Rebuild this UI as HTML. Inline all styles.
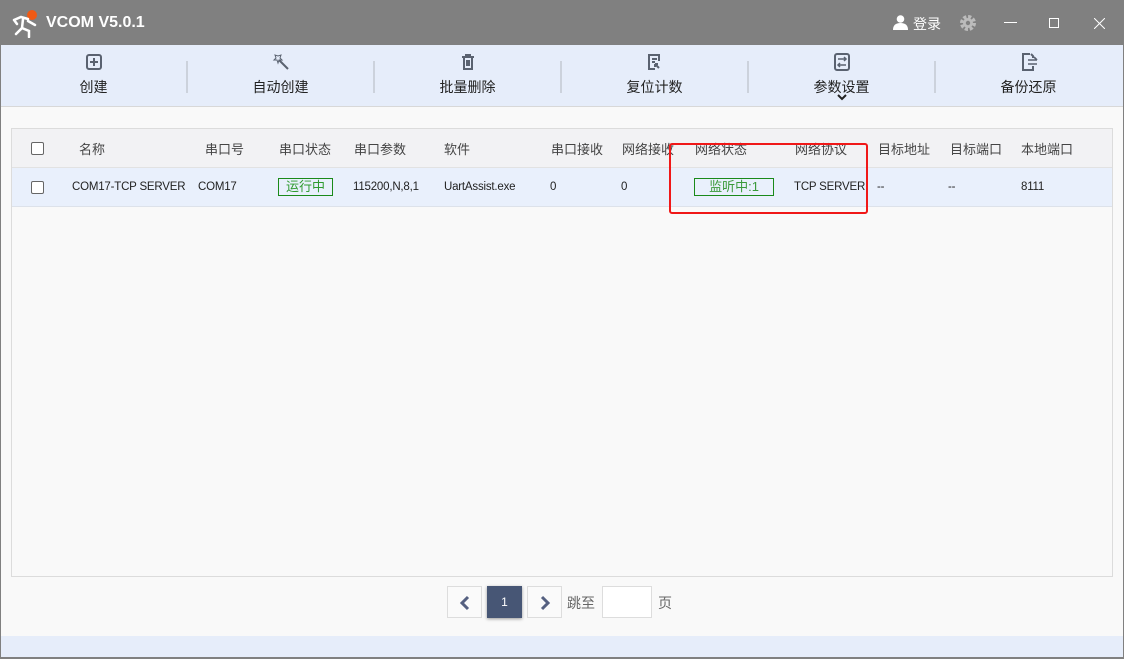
<!DOCTYPE html>
<html><head><meta charset="utf-8"><style>
*{margin:0;padding:0;box-sizing:border-box}
body{width:1124px;height:659px;position:relative;overflow:hidden;background:#f9f9f9;font-family:"Liberation Sans","Noto Sans CJK SC",sans-serif;font-size:13px;color:#333}
.abs{position:absolute}
#title{left:0;top:0;width:1124px;height:45px;background:#808080;color:#fff}
#tb{left:0;top:45px;width:1124px;height:62px;background:#e6edfa;border-bottom:1px solid #d8d8d8}
.tool{position:absolute;top:0;width:187px;height:62px;text-align:center}
.tool .lbl{position:absolute;top:32px;left:0;width:100%;font-size:14px;color:#222}
.tool svg{position:absolute;top:8px;left:50%;margin-left:-9px}
.sep{position:absolute;top:16px;width:2px;height:32px;background:#ccd2dc}
#panel{left:11px;top:128px;width:1102px;height:449px;border:1px solid #dcdcdc;background:#f9f9f9}
#hdr{left:0;top:0;width:1100px;height:39px;background:#f2f2f4;border-bottom:1px solid #e2e2e2}
#row{left:0;top:39px;width:1100px;height:39px;background:#e9f0fc;border-bottom:1px solid #dde2ea}
.c{position:absolute;top:10px;font-size:13px;white-space:nowrap}
#hdr .c{color:#444}
#row .c{font-size:11.5px;color:#222;top:13px;letter-spacing:-0.2px}
.cb{position:absolute;left:19px;top:13px;width:13px;height:13px;border:1.5px solid #666;border-radius:2px;background:#fff}
.tag{position:absolute;border:1px solid #1a8a1a;color:#2e9a2e;font-size:13px;text-align:center;line-height:16px;height:18px;top:10px}
.pg{position:absolute;top:586px;width:35px;height:32px;border:1px solid #ddd;background:#fafafa}
</style></head><body>
<div id="title" class="abs">
 <svg class="abs" style="left:11px;top:8px" width="28" height="30" viewBox="0 0 28 30"><circle cx="21" cy="7" r="5" fill="#f05a14"/><path d="M3 12 L10 9 L17 11 M12 11 L11 20 L5 26 M11 20 L18 23 L18 29 M17 13 L24 17 M3 12 L6 16" stroke="#fff" stroke-width="2.5" fill="none" stroke-linecap="round"/></svg>
 <div class="abs" style="left:46px;top:14px;font-size:16px;font-weight:bold">VCOM V5.0.1</div>
 <svg class="abs" style="left:893px;top:15px" width="15" height="15" viewBox="0 0 15 15"><circle cx="7.5" cy="4" r="3.8" fill="#fff"/><path d="M0 15 Q0 8 7.5 8 Q15 8 15 15Z" fill="#fff"/></svg>
 <div class="abs" style="left:913px;top:14px;font-size:14px">登录</div>
 <svg class="abs" style="left:959px;top:14px" width="18" height="18" viewBox="0 0 18 18"><circle cx="9" cy="9" r="6" fill="none" stroke="#bbb" stroke-width="4" stroke-dasharray="3 1.7"/><circle cx="9" cy="9" r="5" fill="#bbb"/><circle cx="9" cy="9" r="2.2" fill="#808080"/></svg>
 <div class="abs" style="left:1004px;top:22px;width:13px;height:1px;background:#fff"></div>
 <div class="abs" style="left:1049px;top:18px;width:10px;height:10px;border:1px solid #fff"></div>
 <svg class="abs" style="left:1094px;top:18px" width="11" height="11"><path d="M0 0L11 11M11 0L0 11" stroke="#fff" stroke-width="1"/></svg>
</div>
<div id="tb" class="abs">
 <div class="tool" style="left:0"><svg width="18" height="18"><rect x="2" y="2" width="14" height="14" rx="2" fill="none" stroke="#5a6270" stroke-width="2"/><path d="M9 5v8M5 9h8" stroke="#5a6270" stroke-width="2"/></svg><div class="lbl">创建</div></div>
 <div class="sep" style="left:186px"></div>
 <div class="tool" style="left:187px"><svg width="18" height="18"><path d="M7 7L16 16" stroke="#5a6270" stroke-width="2"/><path d="M3 2l1 3-2 2h3l1 3 1-3 3 0-2-2 1-3-3 1z" fill="none" stroke="#5a6270" stroke-width="1"/></svg><div class="lbl">自动创建</div></div>
 <div class="sep" style="left:373px"></div>
 <div class="tool" style="left:374px"><svg width="18" height="18"><path d="M3 4h12M7 4V2h4v2M5 4v12h8V4M8 7v6M10 7v6" fill="none" stroke="#5a6270" stroke-width="2"/></svg><div class="lbl">批量删除</div></div>
 <div class="sep" style="left:560px"></div>
 <div class="tool" style="left:561px"><svg width="18" height="18"><path d="M13 8V2H3v14h6M6 6h5M6 9h3" fill="none" stroke="#5a6270" stroke-width="2"/><path d="M9 11l4 4M9 11h3M9 11v3" stroke="#5a6270" stroke-width="2"/></svg><div class="lbl">复位计数</div></div>
 <div class="sep" style="left:747px"></div>
 <div class="tool" style="left:748px"><svg width="18" height="18"><rect x="2" y="1" width="14" height="16" rx="2" fill="none" stroke="#5a6270" stroke-width="2"/><path d="M5 6h8M11 4l2 2-2 2M13 12H5M7 10l-2 2 2 2" fill="none" stroke="#5a6270" stroke-width="1.5"/></svg><div class="lbl">参数设置</div><svg style="top:49px;margin-left:-5px" width="10" height="7"><path d="M1 1l4 4 4-4" fill="none" stroke="#222" stroke-width="2"/></svg></div>
 <div class="sep" style="left:934px"></div>
 <div class="tool" style="left:935px"><svg width="18" height="18"><path d="M10 1H3v16h10v-4M13 5V3l-2-2" fill="none" stroke="#5a6270" stroke-width="2"/><path d="M8 7h9M8 11h9M14 4l3 3" fill="none" stroke="#5a6270" stroke-width="1.6"/></svg><div class="lbl">备份还原</div></div>
</div>
<div id="panel" class="abs">
 <div id="hdr" class="abs">
  <div class="cb"></div>
  <div class="c" style="left:67px">名称</div><div class="c" style="left:193px">串口号</div><div class="c" style="left:267px">串口状态</div><div class="c" style="left:342px">串口参数</div><div class="c" style="left:432px">软件</div><div class="c" style="left:539px">串口接收</div><div class="c" style="left:610px">网络接收</div><div class="c" style="left:683px">网络状态</div><div class="c" style="left:783px">网络协议</div><div class="c" style="left:866px">目标地址</div><div class="c" style="left:938px">目标端口</div><div class="c" style="left:1009px">本地端口</div>
 </div>
 <div id="row" class="abs">
  <div class="cb"></div>
  <div class="c" style="left:60px">COM17-TCP SERVER</div><div class="c" style="left:186px">COM17</div>
  <div class="tag" style="left:266px;width:55px">运行中</div>
  <div class="c" style="left:341px">115200,N,8,1</div><div class="c" style="left:432px">UartAssist.exe</div><div class="c" style="left:538px">0</div><div class="c" style="left:609px">0</div>
  <div class="tag" style="left:682px;width:80px;color:#3a9a3a">监听中:1</div>
  <div class="c" style="left:782px">TCP SERVER</div><div class="c" style="left:865px">--</div><div class="c" style="left:936px">--</div><div class="c" style="left:1009px">8111</div>
 </div>
</div>
<div class="abs" style="left:669px;top:143px;width:199px;height:71px;border:2px solid #f01818;border-radius:3px"></div>
<div class="pg" style="left:447px"><svg style="position:absolute;left:11px;top:8px" width="12" height="16"><path d="M9 2L3 8l6 6" fill="none" stroke="#556080" stroke-width="3"/></svg></div>
<div class="pg" style="left:487px;background:#475675;border-color:#475675;color:#fff;text-align:center;line-height:30px;font-size:12px;box-shadow:0 1px 3px #999">1</div>
<div class="pg" style="left:527px"><svg style="position:absolute;left:11px;top:8px" width="12" height="16"><path d="M3 2l6 6-6 6" fill="none" stroke="#556080" stroke-width="3"/></svg></div>
<div class="abs" style="left:567px;top:593px;font-size:14px;color:#666">跳至</div>
<div class="pg" style="left:602px;width:50px;background:#fff"></div>
<div class="abs" style="left:658px;top:593px;font-size:14px;color:#666">页</div>
<div class="abs" style="left:0;top:636px;width:1124px;height:21px;background:#e6edfa"></div>
<div class="abs" style="left:0;top:657px;width:1124px;height:2px;background:#808080"></div>
<div class="abs" style="left:0;top:45px;width:1px;height:614px;background:#808080"></div>
<div class="abs" style="left:1123px;top:45px;width:1px;height:614px;background:#808080"></div>
</body></html>
